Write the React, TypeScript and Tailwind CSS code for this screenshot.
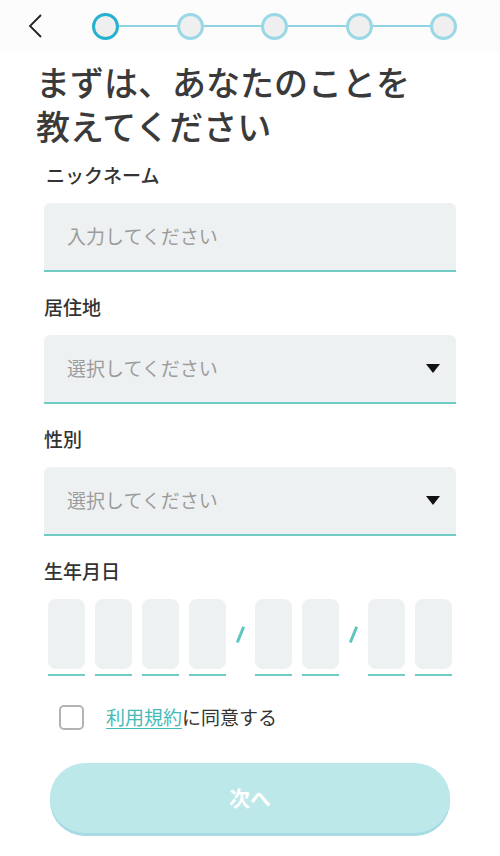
import React from 'react';

const FONT = '"Noto Sans CJK JP", "Noto Sans", sans-serif';
const STEPS = [0, 1, 2, 3, 4];

export default function App() {
  return (
    <div className="w-[500px] h-[856px] bg-white overflow-hidden" style={{ fontFamily: FONT }}>
      {/* header */}
      <div className="h-[52px] flex items-center bg-[#fcfcfc] pl-[28px] pr-[43px]">
        <svg width="16" height="26" viewBox="0 0 16 26" fill="none">
          <path d="M13 2 L2 13 L13 24" stroke="#222" strokeWidth="1.8" />
        </svg>
        <div className="flex items-center flex-1 ml-[48px]">
          {STEPS.map((i) => (
            <React.Fragment key={i}>
              {i > 0 && <div className="flex-1 h-[2px] bg-[#8fd4e2]" />}
              <div
                className={`w-[27px] h-[27px] rounded-full bg-[#efeff0] border-[3px] ${
                  i === 0 ? 'border-[#26b2cf]' : 'border-[#9bd8e6]'
                }`}
              />
            </React.Fragment>
          ))}
        </div>
      </div>

      <div className="px-[44px]">
        <h1 className="-ml-[8px] mt-[8px] text-[34px] leading-[44px] font-medium text-[#3a3a3a]">
          <span className="block">まずは、あなたのことを</span>
          <span className="block">教えてください</span>
        </h1>

        <Label className="mt-[13px] ml-[2px]">ニックネーム</Label>
        <div className="h-[69px] rounded-t-[6px] bg-[#eef1f2] border-b-2 border-[#6fcdc6] flex items-center pl-[23px] text-[19px] text-[#9c9c9c]">
          入力してください
        </div>

        <Label className="mt-[21px]">居住地</Label>
        <SelectBox />

        <Label className="mt-[21px]">性別</Label>
        <SelectBox />

        <Label className="mt-[21px]">生年月日</Label>
        <div className="flex pl-[4px]">
          <DateGroup count={4} />
          <Slash />
          <DateGroup count={2} />
          <Slash />
          <DateGroup count={2} />
        </div>

        <div className="flex items-center mt-[28px] ml-[15px]">
          <div className="w-[25px] h-[25px] rounded-[5px] border-2 border-[#b3b3b3] bg-white" />
          <p className="ml-[22px] text-[19px] leading-[26px] text-[#333]">
            <span className="text-[#44bbb6] underline underline-offset-[3px]">利用規約</span>
            に同意する
          </p>
        </div>

        <button
          type="button"
          className="mt-[33px] ml-[6px] w-[400px] h-[70px] rounded-full bg-[#bde8ea] shadow-[0_3px_0_#a6dbe4] text-white text-[21px] font-bold"
        >
          次へ
        </button>
      </div>
    </div>
  );
}

function Label({ children, className = '' }: { children: React.ReactNode; className?: string }) {
  return (
    <p className={`h-[28px] mb-[14px] text-[19px] leading-[28px] font-medium text-[#333] ${className}`}>
      {children}
    </p>
  );
}

function SelectBox() {
  return (
    <div className="h-[69px] rounded-t-[6px] bg-[#eef1f2] border-b-2 border-[#6fcdc6] flex items-center justify-between pl-[23px] pr-[16px] text-[19px] text-[#9c9c9c]">
      <span>選択してください</span>
      <svg width="14" height="9" viewBox="0 0 14 9">
        <path d="M0 0 H14 L7 9 Z" fill="#111" />
      </svg>
    </div>
  );
}

function DateGroup({ count }: { count: number }) {
  return (
    <div className="flex gap-[10px]">
      {Array.from({ length: count }).map((_, i) => (
        <div key={i} className="w-[37px] flex flex-col">
          <div className="h-[70px] rounded-[8px] bg-[#eef1f2]" />
          <div className="mt-[5px] h-[2px] bg-[#6fcdc6]" />
        </div>
      ))}
    </div>
  );
}

function Slash() {
  return (
    <div className="w-[29px] h-[70px] flex items-center justify-center">
      <div className="w-[2.5px] h-[17px] bg-[#5ec6bf] rotate-[22deg]" />
    </div>
  );
}
